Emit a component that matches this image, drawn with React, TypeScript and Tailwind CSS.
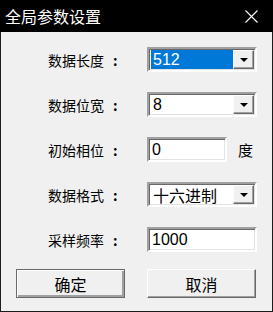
import React from 'react';

const cjk = { fontFamily: '"Noto Sans CJK SC", "Noto Sans", sans-serif' };

function Label({ text }: { text: string }) {
  return (
    <div className="w-[146px] shrink-0 pl-[47px] flex items-center whitespace-nowrap text-[14px] leading-none text-black" style={cjk}>
      <span>{text}</span>
      <span className="ml-[9px] font-bold">:</span>
    </div>
  );
}

function Sunken({ className, children }: { className: string; children?: React.ReactNode }) {
  return (
    <div
      className={`${className} shrink-0 h-[25px] border-2 border-t-[#a0a0a0] border-l-[#a0a0a0] border-b-white border-r-white bg-white shadow-[inset_1px_1px_0_#696969,inset_-1px_-1px_0_#e3e3e3] flex items-center`}
    >
      {children}
    </div>
  );
}

function Combo({ value, selected, cjkText }: { value: string; selected?: boolean; cjkText?: boolean }) {
  return (
    <Sunken className="w-[110px] p-[1px] pl-[2px]">
      <div
        className={`flex-1 h-[19px] flex items-center pl-[2px] whitespace-nowrap text-[16px] leading-none ${selected ? 'bg-[#0078d7] text-white' : 'text-black'}`}
        style={cjkText ? cjk : { fontFamily: '"Liberation Sans", Arial, sans-serif' }}
      >
        {value}
      </div>
      <div className="w-[21px] h-[19px] shrink-0 bg-[#f0f0f0] border-t border-l border-t-white border-l-white border-b border-r border-b-[#696969] border-r-[#696969] shadow-[inset_-1px_-1px_0_#a0a0a0] flex items-center justify-center">
        <svg width="8" height="4" viewBox="0 0 8 4">
          <path d="M0 0h8L4 4z" fill="#000" />
        </svg>
      </div>
    </Sunken>
  );
}

function Edit({ value, width }: { value: string; width: string }) {
  return (
    <Sunken className={width}>
      <span className="pl-[3px] text-[16px] leading-none text-black" style={{ fontFamily: '"Liberation Sans", Arial, sans-serif' }}>
        {value}
      </span>
    </Sunken>
  );
}

function Button({ text, isDefault }: { text: string; isDefault?: boolean }) {
  return (
    <div
      className={`w-[109px] h-[29px] shrink-0 bg-[#f0f0f0] flex items-center justify-center text-[16px] leading-none text-black border ${
        isDefault
          ? 'border-[#696969] shadow-[inset_1px_1px_0_#ffffff,inset_-2px_-2px_0_#a0a0a0]'
          : 'border-t-white border-l-white border-b-[#696969] border-r-[#696969] shadow-[inset_-1px_-1px_0_#a0a0a0]'
      }`}
      style={cjk}
    >
      {text}
    </div>
  );
}

export default function App() {
  return (
    <div className="w-[273px] h-[312px] bg-[#1c1c1c] flex flex-col">
      <div className="h-[32px] bg-black flex items-center justify-between pl-[5px] pr-[15px]">
        <span className="text-white text-[16px] leading-none" style={cjk}>全局参数设置</span>
        <svg width="13" height="13" viewBox="0 0 13 13">
          <path d="M0.5 0.5L12.5 12.5M12.5 0.5L0.5 12.5" stroke="#fff" strokeWidth="1.1" />
        </svg>
      </div>
      <div className="flex-1 mx-[1px] mb-[1px] bg-[#f0f0f0] flex flex-col pt-[15px]">
        <div className="flex flex-col gap-[20px]">
          <div className="flex items-center h-[25px]">
            <Label text="数据长度" />
            <Combo value="512" selected />
          </div>
          <div className="flex items-center h-[25px]">
            <Label text="数据位宽" />
            <Combo value="8" />
          </div>
          <div className="flex items-center h-[25px]">
            <Label text="初始相位" />
            <Edit value="0" width="w-[80px]" />
            <span className="ml-[11px] text-[15px] leading-none text-black" style={cjk}>度</span>
          </div>
          <div className="flex items-center h-[25px]">
            <Label text="数据格式" />
            <Combo value="十六进制" cjkText />
          </div>
          <div className="flex items-center h-[25px]">
            <Label text="采样频率" />
            <Edit value="1000" width="w-[110px]" />
          </div>
        </div>
        <div className="flex mt-[17px] pl-[15px] gap-[22px]">
          <Button text="确定" isDefault />
          <Button text="取消" />
        </div>
      </div>
    </div>
  );
}
